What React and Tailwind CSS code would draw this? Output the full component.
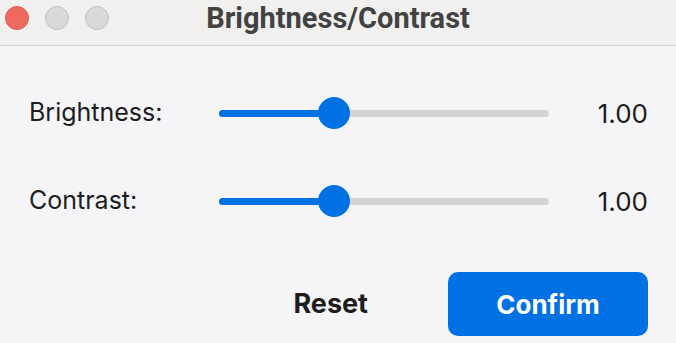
import React, { useState } from "react";

const THUMB = 32;

const Slider = ({ value, min = 0, max = 3, onChange }) => {
  const frac = (value - min) / (max - min);
  // thumb travels inside the track, inset by its radius
  const pos = THUMB / 2 + frac * (330 - THUMB);
  return (
    <div className="relative h-[32px] w-[330px] shrink-0 flex items-center">
      <div className="h-[7px] w-full rounded-full bg-[#d4d3d6]" />
      <div
        className="absolute left-0 h-[7px] rounded-full bg-[#0071e3]"
        style={{ width: `${pos}px` }}
      />
      <div
        className="absolute h-[32px] w-[32px] rounded-full bg-[#0071e3] -translate-x-1/2"
        style={{ left: `${pos}px` }}
      />
      <input
        type="range"
        min={min}
        max={max}
        step={0.01}
        value={value}
        onChange={(e) => onChange(parseFloat(e.target.value))}
        className="absolute inset-0 w-full opacity-0 cursor-pointer"
      />
    </div>
  );
};

const Row = ({ label, value, onChange }) => (
  <div className="flex items-center h-[32px]">
    <div className="w-[219px] shrink-0 pl-[29px] text-[25px] text-[#1d1d1f]">{label}</div>
    <Slider value={value} onChange={onChange} />
    <div className="flex-1 pr-[28px] text-right text-[26px] text-[#1d1d1f]">
      {value.toFixed(2)}
    </div>
  </div>
);

export default function App() {
  const [brightness, setBrightness] = useState(1);
  const [contrast, setContrast] = useState(1);

  return (
    <div
      className="w-[676px] h-[343px] bg-[#f5f5f7] flex flex-col overflow-hidden"
      style={{ fontFamily: "Inter, 'Noto Sans', sans-serif" }}
    >
      {/* title bar */}
      <div className="relative h-[46px] shrink-0 bg-[#f1f0ef] border-b border-[#d8d7d7] flex items-center justify-center">
        <div className="absolute left-[5px] top-[6px] flex gap-[16px]">
          <span className="block h-[24px] w-[24px] rounded-full bg-[#ee6a5f] border border-[#de5a50]" />
          <span className="block h-[24px] w-[24px] rounded-full bg-[#dad9d8] border border-[#c2c1c0]" />
          <span className="block h-[24px] w-[24px] rounded-full bg-[#dad9d8] border border-[#c2c1c0]" />
        </div>
        <h1
          className="text-[29px] leading-none font-bold text-[#424242] -mt-[8px]"
          style={{ fontFamily: "Roboto, 'Liberation Sans', sans-serif" }}
        >
          Brightness/Contrast
        </h1>
      </div>

      {/* body */}
      <div className="flex flex-col pt-[51px]">
        <Row label="Brightness:" value={brightness} onChange={setBrightness} />
        <div className="h-[56px]" />
        <Row label="Contrast:" value={contrast} onChange={setContrast} />
        <div className="flex items-center justify-end mt-[55px] pr-[28px]">
          <button
            className="text-[27px] font-bold text-[#1d1d1f] mr-[80px]"
            onClick={() => {
              setBrightness(1);
              setContrast(1);
            }}
          >
            Reset
          </button>
          <button className="w-[200px] h-[64px] rounded-[10px] bg-[#0071e3] text-white text-[26px] font-bold">
            Confirm
          </button>
        </div>
      </div>
    </div>
  );
}
